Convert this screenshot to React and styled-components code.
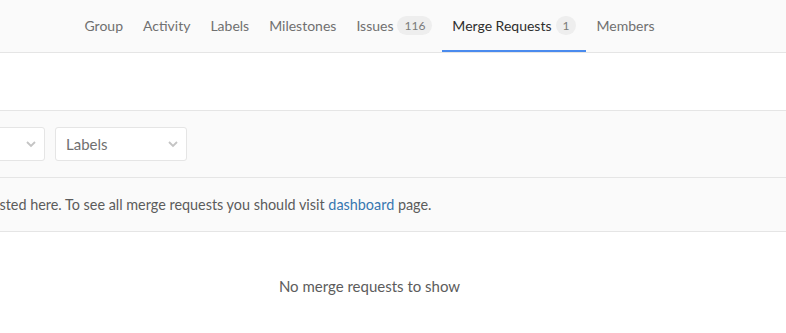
import React from "react";
import styled, { createGlobalStyle } from "styled-components";

const Global = createGlobalStyle`
  html, body { margin: 0; padding: 0; background: #fff; overflow: hidden; }
  body { font-family: "Lato", "Noto Sans", sans-serif; color: #5c5c5c; }
`;

const Page = styled.div`
  width: 1399px;
  margin-left: -330px;
`;

const Nav = styled.nav`
  height: 52px;
  background: #fafafa;
  border-bottom: 1px solid #e5e5e5;
  display: flex;
  justify-content: center;
`;

const Tab = styled.a`
  display: flex;
  align-items: center;
  gap: 4px;
  padding: 0 10px;
  height: 52px;
  box-sizing: border-box;
  font-size: 14px;
  color: ${(p) => (p.$active ? "#2e2e2e" : "#707070")};
  border-bottom: 2px solid ${(p) => (p.$active ? "#4a8bee" : "transparent")};
  padding-top: 1px;
  text-decoration: none;
`;

const Badge = styled.span`
  display: inline-flex;
  align-items: center;
  height: 19px;
  padding: 0 7px;
  border-radius: 10px;
  background: #eee;
  color: #7a7a7a;
  font-size: 12px;
`;

const Spacer = styled.div`
  height: 57px;
`;

const FilterBar = styled.div`
  background: #fafafa;
  border-top: 1px solid #e5e5e5;
  border-bottom: 1px solid #e5e5e5;
  padding: 16px 0 16px 244px;
  display: flex;
  gap: 10px;
`;

const Dropdown = styled.div`
  width: ${(p) => p.$w}px;
  height: 34px;
  box-sizing: border-box;
  background: #fff;
  border: 1px solid #e5e5e5;
  border-radius: 3px;
  display: flex;
  align-items: center;
  justify-content: space-between;
  padding: 0 7px 0 10px;
  font-size: 15px;
  color: #707070;
`;

const Chevron = () => (
  <svg width="12" height="8" viewBox="0 0 12 8" fill="none">
    <path d="M2 2l4 4 4-4" stroke="#c4c4c4" strokeWidth="1.8" />
  </svg>
);

const InfoRow = styled.div`
  background: #fafafa;
  border-bottom: 1px solid #e5e5e5;
  height: 53px;
  display: flex;
  align-items: center;
  white-space: nowrap;
  font-size: 14.4px;
  color: #5c5c5c;
  padding-left: 18px;
`;

const Link = styled.a`
  color: #3777b0;
  text-decoration: none;
`;

const Empty = styled.div`
  text-align: center;
  padding-top: 45px;
  font-size: 15px;
  color: #5c5c5c;
`;

export default function App() {
  return (
    <>
      <Global />
      <Page>
        <Nav>
          <Tab>Group</Tab>
          <Tab>Activity</Tab>
          <Tab>Labels</Tab>
          <Tab>Milestones</Tab>
          <Tab>
            Issues <Badge>116</Badge>
          </Tab>
          <Tab $active>
            Merge Requests <Badge>1</Badge>
          </Tab>
          <Tab>Members</Tab>
        </Nav>
        <Spacer />
        <FilterBar>
          <Dropdown $w={131}>
            Milestone
            <Chevron />
          </Dropdown>
          <Dropdown $w={132}>
            Labels
            <Chevron />
          </Dropdown>
        </FilterBar>
        <InfoRow>
          Only merge requests from GitLab Org group are listed here. To see all
          merge requests you should visit&nbsp;<Link>dashboard</Link>&nbsp;page.
        </InfoRow>
        <Empty>No merge requests to show</Empty>
      </Page>
    </>
  );
}
